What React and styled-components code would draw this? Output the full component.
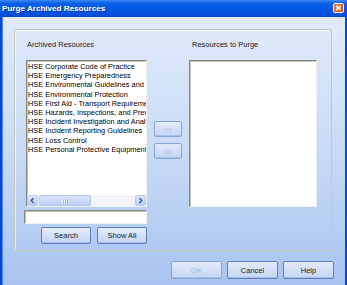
import React from "react"
import styled, { createGlobalStyle } from "styled-components"

const GlobalStyle = createGlobalStyle`
  html, body {
    margin: 0;
    padding: 0;
    background: #ffffff;
  }
  body {
    font-family: "Liberation Sans", Arial, sans-serif;
  }
`

const archived = [
  "HSE Corporate Code of Practice",
  "HSE Emergency Preparedness",
  "HSE Environmental Guidelines and Standards",
  "HSE Environmental Protection",
  "HSE First Aid - Transport Requirements",
  "HSE Hazards, Inspections, and Preventive Measures",
  "HSE Incident Investigation and Analysis",
  "HSE Incident Reporting Guidelines",
  "HSE Loss Control",
  "HSE Personal Protective Equipment",
]

const Chevron = ({ dir }) => (
  <svg width="7" height="7" viewBox="0 0 7 7">
    <path
      d={dir === "left" ? "M4.6 1 L2.2 3.5 L4.6 6" : "M2.4 1 L4.8 3.5 L2.4 6"}
      fill="none"
      stroke="#3d5a9a"
      strokeWidth="1.4"
    />
  </svg>
)

const CloseGlyph = () => (
  <svg width="7" height="6" viewBox="0 0 7 6">
    <path d="M1 0.8 L6 5.2 M6 0.8 L1 5.2" stroke="#fff" strokeWidth="1.3" />
  </svg>
)

const App = () => {
  return (
    <>
      <GlobalStyle />
      <Window>
        <TitleBar>
          <Title>Purge Archived Resources</Title>
          <CloseButton>
            <CloseGlyph />
          </CloseButton>
        </TitleBar>

        <Body>
          <GroupBox>
            <Column>
              <Label>Archived Resources</Label>
              <ListBox $indent>
                <Items>
                  {archived.map((item, index) => (
                    <Item key={index}>{item}</Item>
                  ))}
                </Items>
                <HScroll>
                  <ScrollArrow>
                    <Chevron dir="left" />
                  </ScrollArrow>
                  <Track>
                    <Thumb>
                      <Grip />
                    </Thumb>
                  </Track>
                  <ScrollArrow>
                    <Chevron dir="right" />
                  </ScrollArrow>
                </HScroll>
              </ListBox>
              <TextInput />
              <ButtonRow $gap={6}>
                <Button $w={50}>Search</Button>
                <Button $w={50}>Show All</Button>
              </ButtonRow>
            </Column>

            <MoveColumn>
              <Button $w={28} $h={16} disabled>&gt;&gt;</Button>
              <Button $w={28} $h={16} disabled>&lt;&lt;</Button>
            </MoveColumn>

            <Column>
              <Label>Resources to Purge</Label>
              <ListBox />
            </Column>
          </GroupBox>

          <ButtonRow $gap={5}>
            <Button $w={51} $h={18} disabled>OK</Button>
            <Button $w={51} $h={18}>Cancel</Button>
            <Button $w={51} $h={18}>Help</Button>
          </ButtonRow>
        </Body>
      </Window>
    </>
  )
}

export default App

const Window = styled.div`
  width: 347px;
  height: 285px;
  display: flex;
  flex-direction: column;
  background: #0a46d6;
  box-sizing: border-box;
`

const TitleBar = styled.div`
  height: 17px;
  flex: none;
  display: flex;
  align-items: center;
  justify-content: space-between;
  padding: 0 3px 0 2px;
  background: linear-gradient(#3d8af7 0%, #0d61e6 18%, #0257e4 55%, #0650dc 85%, #0846c8 100%);
`

const Title = styled.div`
  color: #ffffff;
  font-weight: bold;
  font-size: 8.1px;
  letter-spacing: 0;
  text-shadow: 1px 1px 0 #0a3a9c;
  white-space: nowrap;
`

const CloseButton = styled.div`
  width: 11px;
  height: 10px;
  box-sizing: border-box;
  border: 1px solid #ffffff;
  border-radius: 2px;
  background: radial-gradient(circle at 40% 35%, #f08a60, #d94a1e 75%);
  display: flex;
  align-items: center;
  justify-content: center;
  margin-top: -1px;
`

const Body = styled.div`
  flex: 1;
  margin: 0 2px 3px 2px;
  padding: 12px 11px 6px 11px;
  display: flex;
  flex-direction: column;
  gap: 7px;
  background: linear-gradient(#e0eafa 0%, #d0e0f8 35%, #bcd2f4 70%, #a8c3ef 100%);
  border-left: 1px solid #4b86ea;
  box-sizing: border-box;
`

const GroupBox = styled.div`
  height: 222px;
  margin-right: 2px;
  box-sizing: border-box;
  border: 1px solid #c6c7bd;
  border-radius: 2px;
  box-shadow: inset 1px 1px 0 rgba(255, 255, 255, 0.6);
  padding: 10px 16px 0 9px;
  display: grid;
  grid-template-columns: 123px 28px 128px;
  column-gap: 7px;
  align-items: start;
`

const Column = styled.div`
  display: flex;
  flex-direction: column;
`

const MoveColumn = styled.div`
  display: flex;
  flex-direction: column;
  gap: 6px;
  padding-top: 81px;
  margin-left: 0;
`

const Label = styled.div`
  height: 10px;
  line-height: 10px;
  font-size: 7.5px;
  color: #1c1c1c;
  margin: 0 0 10px 3px;
  white-space: nowrap;
`

const ListBox = styled.div`
  height: 147px;
  margin-left: ${p => (p.$indent ? "2px" : "0")};
  box-sizing: border-box;
  background: #ffffff;
  border-style: solid;
  border-width: 1px;
  border-color: #8a877c #efeee8 #efeee8 #8a877c;
  box-shadow: inset 1px 1px 0 #c4c2b6;
  display: flex;
  flex-direction: column;
  overflow: hidden;
`

const Items = styled.div`
  flex: 1;
  padding: 1px 0 0 1px;
  overflow: hidden;
`

const Item = styled.div`
  font-size: 7.4px;
  line-height: 9.2px;
  height: 9.2px;
  color: #000000;
  white-space: nowrap;
`

const HScroll = styled.div`
  height: 11px;
  flex: none;
  display: flex;
  background: #f3f4f8;
`

const ScrollArrow = styled.div`
  width: 11px;
  height: 11px;
  box-sizing: border-box;
  border: 1px solid #b7cbf4;
  border-radius: 2px;
  background: linear-gradient(#dbe6fc, #b8cdf5);
  display: flex;
  align-items: center;
  justify-content: center;
  flex: none;
`

const Track = styled.div`
  flex: 1;
  padding: 0 1px;
`

const Thumb = styled.div`
  width: 52px;
  height: 11px;
  box-sizing: border-box;
  border: 1px solid #b3c8f3;
  border-radius: 2px;
  background: linear-gradient(#d7e3fb, #bcd0f6);
  display: flex;
  align-items: center;
  justify-content: center;
`

const Grip = styled.div`
  width: 6px;
  height: 4px;
  background: repeating-linear-gradient(90deg, #eef3fe 0 1px, #9db6e8 1px 2px);
`

const TextInput = styled.div`
  height: 14px;
  margin-top: 3px;
  box-sizing: border-box;
  background: #ffffff;
  border-style: solid;
  border-width: 1px;
  border-color: #8a877c #efeee8 #efeee8 #8a877c;
  box-shadow: inset 1px 1px 0 #c4c2b6;
`

const ButtonRow = styled.div`
  display: flex;
  justify-content: flex-end;
  gap: ${p => p.$gap}px;
  margin-top: 3px;
`

const Button = styled.div`
  width: ${p => p.$w}px;
  height: ${p => p.$h || 17}px;
  box-sizing: border-box;
  border: 1px solid ${p => (p.disabled ? "#8aa4d2" : "#5f80bd")};
  border-radius: 2px;
  background: linear-gradient(#e2ebfa 0%, #d3e0f7 50%, #c3d5f3 100%);
  box-shadow: inset 0 -1px 0 rgba(120, 150, 205, 0.35);
  display: flex;
  align-items: center;
  justify-content: center;
  font-size: 7.5px;
  color: ${p => (p.disabled ? "#a9b9d9" : "#1c1c1c")};
  white-space: nowrap;
  user-select: none;
`
